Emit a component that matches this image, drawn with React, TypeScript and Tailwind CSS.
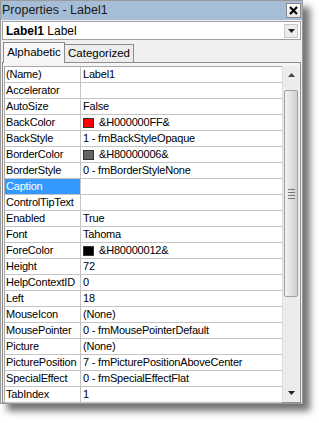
const rows: { name: string; value: string; swatch?: string; selected?: boolean }[] = [
  { name: '(Name)', value: 'Label1' },
  { name: 'Accelerator', value: '' },
  { name: 'AutoSize', value: 'False' },
  { name: 'BackColor', value: '&H000000FF&', swatch: 'bg-[#ff0000]' },
  { name: 'BackStyle', value: '1 - fmBackStyleOpaque' },
  { name: 'BorderColor', value: '&H80000006&', swatch: 'bg-[#646464]' },
  { name: 'BorderStyle', value: '0 - fmBorderStyleNone' },
  { name: 'Caption', value: '', selected: true },
  { name: 'ControlTipText', value: '' },
  { name: 'Enabled', value: 'True' },
  { name: 'Font', value: 'Tahoma' },
  { name: 'ForeColor', value: '&H80000012&', swatch: 'bg-black' },
  { name: 'Height', value: '72' },
  { name: 'HelpContextID', value: '0' },
  { name: 'Left', value: '18' },
  { name: 'MouseIcon', value: '(None)' },
  { name: 'MousePointer', value: '0 - fmMousePointerDefault' },
  { name: 'Picture', value: '(None)' },
  { name: 'PicturePosition', value: '7 - fmPicturePositionAboveCenter' },
  { name: 'SpecialEffect', value: '0 - fmSpecialEffectFlat' },
  { name: 'TabIndex', value: '1' },
];

function Arrow({ up }: { up?: boolean }) {
  return (
    <svg width="7" height="4" viewBox="0 0 7 4">
      {up ? (
        <polygon points="0,4 7,4 3.5,0" fill="#444" />
      ) : (
        <polygon points="0,0 7,0 3.5,4" fill="#222" />
      )}
    </svg>
  );
}

export default function App() {
  return (
    <div className="w-[319px] h-[423px] bg-white relative font-['Liberation_Sans',Arial,sans-serif] text-[11px] text-black">
      <div className="w-[303px] h-[404px] bg-[#f0f0f0] border border-[#9a9a9a] shadow-[7px_7px_7px_rgba(0,0,0,0.55)] flex flex-col">

        {/* title bar */}
        <div className="h-[21px] bg-[#a6bdd8] flex items-center justify-between pl-[1px] pr-[1px]">
          <span className="text-[12.5px] text-[#1a1a1a]">Properties - Label1</span>
          <div className="w-[15px] h-[15px] bg-gradient-to-b from-white to-[#e4e4e4] border border-[#8a8a8a] flex items-center justify-center">
            <svg width="9" height="9" viewBox="0 0 9 9">
              <path d="M1 1 L8 8 M8 1 L1 8" stroke="#000" strokeWidth="2.2" />
            </svg>
          </div>
        </div>

        {/* object dropdown */}
        <div className="mx-[1px] mt-[1px] h-[19px] bg-white border border-[#a0a0a0] flex items-center justify-between pl-[3px] pr-[2px] text-[12px]">
          <span>
            <b>Label1</b> Label
          </span>
          <div className="w-[14px] h-[14px] bg-[#ececec] border border-[#c8c8c8] flex items-center justify-center">
            <Arrow />
          </div>
        </div>

        {/* tabs */}
        <div className="h-[22px] mt-[1px] flex items-end pl-[2px] text-[11.5px]">
          <div className="h-[21px] w-[62px] bg-[#f7f7f7] border border-b-0 border-[#8c8c8c] flex items-center justify-center relative top-[1px] z-10">
            Alphabetic
          </div>
          <div className="h-[18px] w-[69px] bg-[#ededed] border border-b-0 border-l-0 border-[#8c8c8c] flex items-center justify-center">
            Categorized
          </div>
        </div>

        {/* grid */}
        <div className="mx-[1px] h-[341px] border border-[#8c8c8c] bg-[#f4f4f4] flex pl-[1px] pt-[3px] pr-[1px] pb-[1px] tracking-[-0.2px]">
          <div className="flex-1 flex flex-col border-l border-t border-[#a8a8a8] bg-white">
            {rows.map((r) => (
              <div key={r.name} className="h-[16px] flex border-b border-[#c4c4c4] shrink-0">
                <div
                  className={
                    'w-[76px] pl-[1px] border-r border-[#c4c4c4] leading-[15px] whitespace-nowrap overflow-hidden ' +
                    (r.selected ? 'bg-[#3399ff] text-white' : '')
                  }
                >
                  {r.name}
                </div>
                <div className="flex-1 pl-[2px] flex items-center whitespace-nowrap overflow-hidden leading-[15px]">
                  {r.swatch && (
                    <span className={'w-[11px] h-[10px] border border-[#333] mr-[5px] ' + r.swatch} />
                  )}
                  {r.value}
                </div>
              </div>
            ))}
          </div>

          {/* scrollbar */}
          <div className="w-[17px] flex flex-col bg-[#ececec] border-l border-[#dcdcdc]">
            <div className="h-[17px] flex items-center justify-center">
              <Arrow up />
            </div>
            <div className="mt-[7px] h-[207px] mx-[1px] bg-gradient-to-r from-[#f2f2f2] via-[#e0e0e0] to-[#cfcfcf] border border-[#a0a0a0] rounded-[2px] flex flex-col items-center justify-center gap-[2px]">
              <div className="w-[7px] h-px bg-[#777]" />
              <div className="w-[7px] h-px bg-[#777]" />
              <div className="w-[7px] h-px bg-[#777]" />
              <div className="w-[7px] h-px bg-[#777]" />
            </div>
            <div className="flex-1" />
            <div className="h-[17px] flex items-center justify-center">
              <Arrow />
            </div>
          </div>
        </div>
      </div>
    </div>
  );
}
